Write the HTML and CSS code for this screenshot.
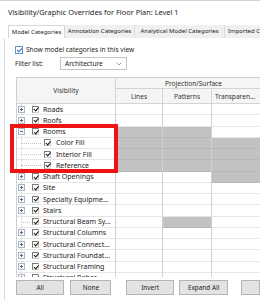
FILE: index.html
```html
<!DOCTYPE html>
<html lang="en">
<head>
  <meta charset="UTF-8" />
  <title>Visibility/Graphic Overrides</title>
  <link rel="stylesheet" href="styles.css">
</head>
<body>

  <div class="title">Visibility/Graphic Overrides for Floor Plan: Level 1</div>

  <!-- Tabs -->
  <div class="tabs">
    <div class="tab activa t-model">Model Categories</div>
    <div class="tab t-annot">Annotation Categories</div>
    <div class="tab t-analyt">Analytical Model Categories</div>
    <div class="tab t-import">Imported Categories</div>
  </div>

  <div class="page">
    <div class="show-row">
      <span class="chk-azul"></span>
      <span>Show model categories in this view</span>
    </div>

    <div class="filter-row">
      <span class="filter-label">Filter list:</span>
      <div class="select">
        <span>Architecture</span>
        <svg width="6" height="4" viewBox="0 0 6 4"><path d="M0.5 0.5 L3 3 L5.5 0.5" fill="none" stroke="#8a8a8a" stroke-width="0.8"/></svg>
      </div>
    </div>

    <!-- Tabla de categorias -->
    <div class="grid-wrap">
      <div class="grid-head">
        <div class="hcell h-vis">Visibility</div>
        <div class="hcell h-proj">Projection/Surface</div>
        <div class="hcell">Lines</div>
        <div class="hcell">Patterns</div>
        <div class="hcell h-left">Transparen...</div>
      </div>

      <div class="row">
        <div class="vis"><span class="exp"></span><span class="cb"></span><span class="lbl">Roads</span></div>
        <div class="c"></div><div class="c"></div><div class="c"></div>
      </div>
      <div class="row">
        <div class="vis"><span class="exp"></span><span class="cb"></span><span class="lbl">Roofs</span></div>
        <div class="c"></div><div class="c"></div><div class="c"></div>
      </div>
      <div class="row">
        <div class="vis"><span class="exp menos"></span><span class="cb"></span><span class="lbl">Rooms</span></div>
        <div class="c g"></div><div class="c g"></div><div class="c"></div>
      </div>
      <div class="row">
        <div class="vis"><span class="rama"></span><span class="cb"></span><span class="lbl hijo">Color Fill</span></div>
        <div class="c g"></div><div class="c g"></div><div class="c g"></div>
      </div>
      <div class="row">
        <div class="vis"><span class="rama"></span><span class="cb"></span><span class="lbl hijo">Interior Fill</span></div>
        <div class="c g"></div><div class="c g"></div><div class="c g"></div>
      </div>
      <div class="row">
        <div class="vis"><span class="rama"></span><span class="cb"></span><span class="lbl hijo">Reference</span></div>
        <div class="c g"></div><div class="c g"></div><div class="c g"></div>
      </div>
      <div class="row">
        <div class="vis"><span class="exp"></span><span class="cb"></span><span class="lbl">Shaft Openings</span></div>
        <div class="c"></div><div class="c"></div><div class="c g"></div>
      </div>
      <div class="row">
        <div class="vis"><span class="exp"></span><span class="cb"></span><span class="lbl">Site</span></div>
        <div class="c"></div><div class="c"></div><div class="c"></div>
      </div>
      <div class="row">
        <div class="vis"><span class="exp"></span><span class="cb"></span><span class="lbl">Specialty Equipme...</span></div>
        <div class="c"></div><div class="c"></div><div class="c"></div>
      </div>
      <div class="row">
        <div class="vis"><span class="exp"></span><span class="cb"></span><span class="lbl">Stairs</span></div>
        <div class="c"></div><div class="c"></div><div class="c"></div>
      </div>
      <div class="row">
        <div class="vis"><span class="sin-exp"></span><span class="cb"></span><span class="lbl">Structural Beam Sy...</span></div>
        <div class="c"></div><div class="c g"></div><div class="c"></div>
      </div>
      <div class="row">
        <div class="vis"><span class="exp"></span><span class="cb"></span><span class="lbl">Structural Columns</span></div>
        <div class="c"></div><div class="c"></div><div class="c"></div>
      </div>
      <div class="row">
        <div class="vis"><span class="exp"></span><span class="cb"></span><span class="lbl">Structural Connect...</span></div>
        <div class="c"></div><div class="c"></div><div class="c"></div>
      </div>
      <div class="row">
        <div class="vis"><span class="exp"></span><span class="cb"></span><span class="lbl">Structural Foundat...</span></div>
        <div class="c"></div><div class="c"></div><div class="c"></div>
      </div>
      <div class="row">
        <div class="vis"><span class="exp"></span><span class="cb"></span><span class="lbl">Structural Framing</span></div>
        <div class="c"></div><div class="c"></div><div class="c"></div>
      </div>
      <div class="row">
        <div class="vis"><span class="exp"></span><span class="cb"></span><span class="lbl">Structural Rebar</span></div>
        <div class="c"></div><div class="c"></div><div class="c"></div>
      </div>
    </div>

    <div class="buttons">
      <button class="btn b-all">All</button>
      <button class="btn b-none">None</button>
      <button class="btn b-invert">Invert</button>
      <button class="btn b-expand">Expand All</button>
      <button class="btn b-more"></button>
    </div>
  </div>

  <!-- Recuadro rojo de resaltado -->
  <div class="resaltado"></div>

</body>
</html>
```

FILE: styles.css
```css
html, body {
  margin: 0;
  padding: 0;
}

body {
  position: relative;
  width: 260px;
  height: 300px;
  overflow: hidden;
  background-color: white;
  font-family: "Noto Sans", "Open Sans", sans-serif;
  color: #1b1b1b;
}

.title {
  height: 24px;
  box-sizing: border-box;
  border-top: 1px solid #d2d2d2;
  padding-left: 8px;
  line-height: 22px;
  font-size: 7.4px;
  white-space: nowrap;
}

.tabs {
  display: flex;
  margin: 1px 0 0 8px;
  height: 13px;
  background-color: #f0f0f0;
  font-size: 6px;
  white-space: nowrap;
}

.tab {
  flex: none;
  box-sizing: border-box;
  text-align: center;
  line-height: 13px;
  border-right: 1px solid #dcdcdc;
  overflow: hidden;
}

.tab.activa {
  background-color: white;
  border: 1px solid #d8d8d8;
  border-bottom: none;
  line-height: 12px;
}

.t-model { width: 57px; }
.t-annot { width: 70px; }
.t-analyt { width: 90px; }
.t-import { width: 60px; text-align: left; padding-left: 3px; }

.page {
  margin-left: 4px;
  border-left: 1px solid #d3dbe3;
  padding-left: 10px;
  height: 262px;
  font-size: 6.6px;
}

.show-row {
  display: flex;
  align-items: center;
  gap: 3px;
  padding-top: 7px;
  height: 9px;
}

.chk-azul {
  width: 8px;
  height: 8px;
  box-sizing: border-box;
  border: 1px solid #5a94d6;
  position: relative;
}

.chk-azul::after {
  content: "";
  position: absolute;
  left: 2px;
  top: 0px;
  width: 2px;
  height: 4px;
  border-right: 1px solid #2f6fc4;
  border-bottom: 1px solid #2f6fc4;
  transform: rotate(45deg);
}

.filter-row {
  display: flex;
  align-items: center;
  margin-top: 3px;
  height: 13px;
}

.filter-label {
  width: 45px;
}

.select {
  display: flex;
  align-items: center;
  justify-content: space-between;
  width: 67px;
  height: 13px;
  box-sizing: border-box;
  border: 1px solid #c4c4c4;
  padding: 0 4px 0 4px;
}

/* tabla */
.grid-wrap {
  margin: 7px 0 0 1px;
  height: 200px;
  overflow: hidden;
  border-top: 1px solid #cfcfcf;
  border-left: 1px solid #cfcfcf;
  box-sizing: border-box;
  font-size: 7px;
}

.grid-head {
  display: grid;
  grid-template-columns: 99px 47px 49px 60px;
  grid-template-rows: 11px 15px;
  background-color: #f5f5f5;
  color: #333;
  font-size: 6.6px;
}

.hcell {
  display: flex;
  align-items: center;
  justify-content: center;
  border-right: 1px solid #d4d4d4;
  border-bottom: 1px solid #d4d4d4;
  white-space: nowrap;
}

.h-vis {
  grid-row: 1 / 3;
}

.h-proj {
  grid-column: 2 / 5;
}

.h-left {
  justify-content: flex-start;
  padding-left: 3px;
}

.row {
  display: grid;
  grid-template-columns: 99px 47px 49px 60px;
  height: 11.25px;
}

.c {
  border-right: 1px solid #d0d0d0;
  border-bottom: 1px solid #e6e6e6;
}

.c.g {
  background-color: #c2c2c2;
  border-bottom-color: #b8b8b8;
}

.vis {
  position: relative;
  display: flex;
  align-items: center;
  border-right: 1px solid #d0d0d0;
  border-bottom: 1px solid #e6e6e6;
  white-space: nowrap;
  overflow: hidden;
}

.vis::before {
  content: "";
  position: absolute;
  left: 4px;
  top: 0;
  bottom: 0;
  border-left: 1px dotted #d6d6d6;
}

.exp {
  position: relative;
  z-index: 1;
  width: 7px;
  height: 7px;
  box-sizing: border-box;
  margin-left: 1px;
  border: 1px solid #a7b5c6;
  background-color: #f7f9fb;
}

.exp::before {
  content: "";
  position: absolute;
  left: 1px;
  top: 2px;
  width: 3px;
  height: 1px;
  background-color: #56687e;
}

.exp::after {
  content: "";
  position: absolute;
  left: 2px;
  top: 1px;
  width: 1px;
  height: 3px;
  background-color: #56687e;
}

.exp.menos::after {
  display: none;
}

.sin-exp {
  position: relative;
  width: 7px;
  height: 100%;
  margin-left: 1px;
}

.sin-exp::after {
  content: "";
  position: absolute;
  left: 3px;
  top: 50%;
  width: 9px;
  border-top: 1px dotted #c0c0c0;
}

.rama {
  position: relative;
  width: 26px;
  height: 100%;
  margin-left: 1px;
  margin-right: -7px;
}

.rama::after {
  content: "";
  position: absolute;
  left: 3px;
  top: 50%;
  width: 20px;
  border-top: 1px dotted #c0c0c0;
}

.cb {
  position: relative;
  width: 7px;
  height: 7px;
  box-sizing: border-box;
  margin-left: 7px;
  border: 1px solid #7a7a7a;
  border-right-color: #c9c9c9;
  border-bottom-color: #c9c9c9;
  background-color: white;
}

.cb::after {
  content: "";
  position: absolute;
  left: 1.5px;
  top: -0.5px;
  width: 1.5px;
  height: 3.5px;
  border-right: 1.4px solid #111;
  border-bottom: 1.4px solid #111;
  transform: rotate(40deg);
}

.lbl {
  margin-left: 4px;
}

.lbl.hijo {
  margin-left: 5px;
}

.buttons {
  display: flex;
  margin-top: 3px;
  height: 15px;
}

.btn {
  height: 15px;
  padding: 0;
  border: 1px solid #b4b4b4;
  background-color: #e3e3e3;
  font-family: "Noto Sans", "Open Sans", sans-serif;
  font-size: 6.4px;
  color: #222;
}

.b-all { width: 52px; margin-left: 1px; }
.b-none { width: 44px; margin-left: 6px; }
.b-invert { width: 51px; margin-left: 15px; }
.b-expand { width: 53px; margin-left: 5px; }
.b-more { width: 20px; margin-left: 13px; }

.resaltado {
  position: absolute;
  left: 10px;
  top: 124px;
  width: 108px;
  height: 49px;
  box-sizing: border-box;
  border: 4px solid #ee1414;
}
```
